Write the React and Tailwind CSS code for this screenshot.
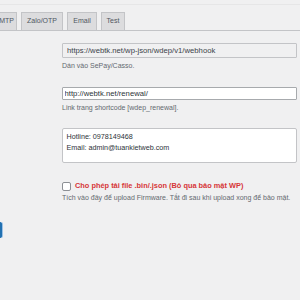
const font = { fontFamily: '"Liberation Sans", Arial, sans-serif' };

function Tab({ label, width, align = 'justify-center' }) {
  return (
    <div
      className={`${width} ${align} h-[19px] -mb-px shrink-0 flex items-center border border-[#c3c4c7] bg-[#dcdcde] text-[7px] text-[#50575e]`}
    >
      {label}
    </div>
  );
}

export default function App() {
  return (
    <div
      className="w-[300px] h-[300px] overflow-hidden bg-[#f0f0f1] text-[#2c3338]"
      style={font}
    >
      <div className="h-[5px] border-b border-[#e6e6e7]" />

      {/* nav tabs */}
      <div className="mt-[7px] flex items-end gap-[4px] border-b border-[#c3c4c7] -ml-[17px]">
        <Tab label="SMTP" width="w-[34px] pr-[2px]" align="justify-end" />
        <Tab label="Zalo/OTP" width="w-[42px]" />
        <Tab label="Email" width="w-[30px]" />
        <Tab label="Test" width="w-[24px]" />
      </div>

      <div className="ml-[62px] w-[235px] flex flex-col">
        <input
          readOnly
          defaultValue="https://webtk.net/wp-json/wdep/v1/webhook"
          className="mt-[12px] h-[15px] w-full pl-[4px] border border-[#c3c4c7] bg-[#f0f0f1] text-[7.7px] text-[#3c434a] outline-none rounded-[1px]"
        />
        <p className="mt-[3px] h-[10px] leading-[10px] text-[7px] text-[#646970]">Dán vào SePay/Casso.</p>

        <input
          readOnly
          defaultValue="http://webtk.net/renewal/"
          className="mt-[16px] h-[13px] w-full pl-[1.5px] border border-[#a7aaad] bg-white text-[7.7px] text-[#2c3338] outline-none rounded-[1px]"
        />
        <p className="mt-[3px] h-[10px] leading-[10px] text-[7px] text-[#646970]">
          Link trang shortcode [wdep_renewal].
        </p>

        <textarea
          readOnly
          defaultValue={'Hotline: 0978149468\nEmail: admin@tuankietweb.com'}
          className="mt-[15px] h-[35px] w-full resize-none pl-[3.5px] pt-[2px] border border-[#c3c4c7] bg-white text-[7.2px] leading-[11px] text-[#2c3338] outline-none rounded-[2px] overflow-hidden"
        />

        <label className="mt-[18px] h-[10px] flex items-center gap-[4px]">
          <span className="w-[9px] h-[9px] shrink-0 rounded-[2px] border border-[#8c8f94] bg-white" />
          <span className="text-[7.4px] font-bold text-[#d63638] whitespace-nowrap">
            Cho phép tải file .bin/.json (Bỏ qua bảo mật WP)
          </span>
        </label>
        <p className="mt-[2px] h-[10px] leading-[10px] text-[7px] text-[#646970] whitespace-nowrap">
          Tích vào đây để upload Firmware. Tắt đi sau khi upload xong để bảo mật.
        </p>
      </div>

      {/* submit button, mostly off-screen */}
      <div className="mt-[19px] -ml-[58px] w-[60px] h-[16px] rounded-[2px] bg-[#2271b1] border border-[#2271b1] shadow-[1px_0_0_#9ec2e6]" />
    </div>
  );
}
